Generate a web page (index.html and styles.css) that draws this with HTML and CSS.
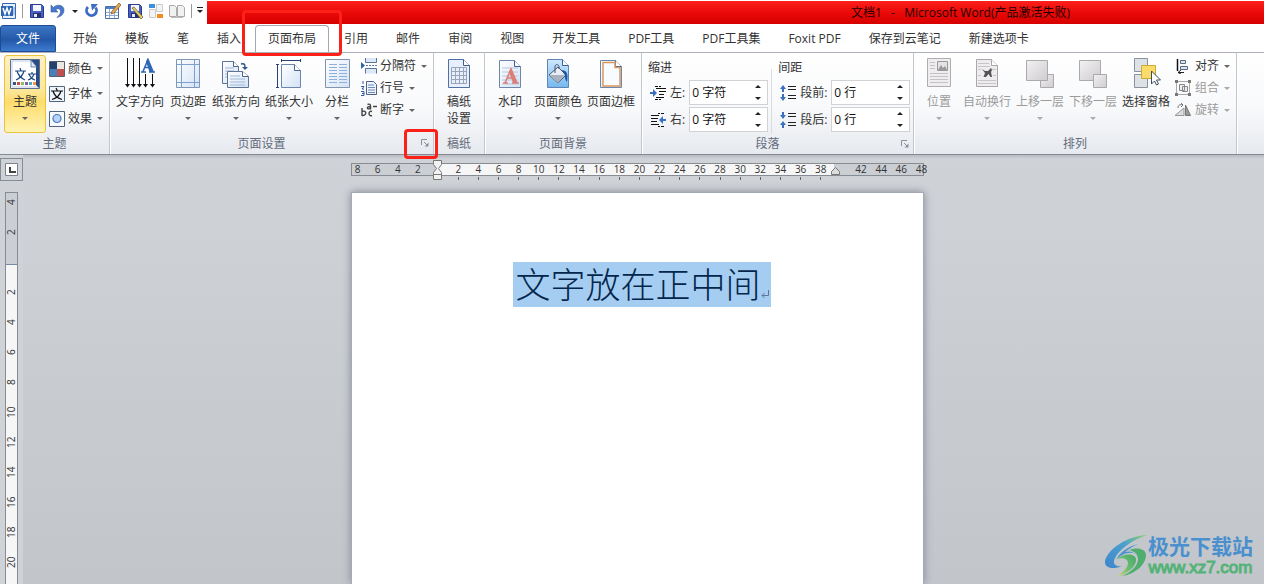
FILE: index.html
```html
<!DOCTYPE html>
<html lang="zh-CN">
<head>
<meta charset="utf-8">
<title>文档1 - Microsoft Word</title>
<link rel="stylesheet" href="styles.css">
</head>
<body>
<svg class="defs" aria-hidden="true">
  <defs>
    <linearGradient id="g-sheet" x1="0" y1="0" x2="1" y2="1"><stop offset="0" stop-color="#fff"/><stop offset="1" stop-color="#d3e2f6"/></linearGradient>
    <linearGradient id="g-gray" x1="0" y1="0" x2="1" y2="1"><stop offset="0" stop-color="#f3f1f3"/><stop offset="1" stop-color="#cfccd0"/></linearGradient>
    <linearGradient id="g-sky" x1="0" y1="0" x2="0" y2="1"><stop offset="0" stop-color="#cfe8fd"/><stop offset="1" stop-color="#74b8ee"/></linearGradient>
    <linearGradient id="g-swirl" x1="0" y1="1" x2="1" y2="0"><stop offset="0" stop-color="#3f86cb"/><stop offset=".6" stop-color="#4a9fd0"/><stop offset="1" stop-color="#8fd06a"/></linearGradient>
    <linearGradient id="g-leaf" x1="0" y1="1" x2="1" y2="0"><stop offset="0" stop-color="#e2d455"/><stop offset=".45" stop-color="#6cc070"/><stop offset="1" stop-color="#45a76a"/></linearGradient>
    <symbol id="sheet" viewBox="0 0 24 30"><path d="M1.500 1.500h15l6 6v21h-21z" fill="url(#g-sheet)" stroke="#6d86ab"/><path d="M16.500 1.500v6h6" fill="#fff" stroke="#3f5f92"/></symbol>
    <symbol id="sheet-gray" viewBox="0 0 24 30"><path d="M1.500 1.500h15l6 6v21h-21z" fill="#eeecee" stroke="#aaa7ab"/><path d="M16.500 1.500v6h6" fill="#fff" stroke="#aaa7ab"/></symbol>
    <symbol id="floppy" viewBox="0 0 16 16"><path d="M1.500 1.500h11l2 2v11h-13z" fill="#4a5fc4" stroke="#2b3a91"/><path d="M4 2h8v6H4z" fill="#f4f7ff"/><path d="M4 10h8v4.500H4z" fill="#26306e"/><path d="M5 11h3v3H5z" fill="#e6e9fa"/></symbol>
    <symbol id="launch" viewBox="0 0 8 8"><path d="M.500 6V.500H6" fill="none" stroke="#8b909a"/><path d="M3 3l3 3" stroke="#8b909a"/><path d="M7.500 3.500v4h-4z" fill="#8b909a"/></symbol>
  </defs>
</svg>

<header class="titlebar">
  <div class="quick">
    <svg class="i16" viewBox="0 0 16 16"><path d="M1.500.500h13v15h-13z" fill="#e8f0fb" stroke="#3668ad"/><path d="M0 3h12v10H0z" fill="#2c67b3"/><path d="M2 5l2 6 2-6 2 6 2-6" fill="none" stroke="#fff" stroke-width="1.500"/><path d="M13 4v8" stroke="#7da2d2"/></svg>
    <span class="bar"></span>
    <button aria-label="保存"><svg class="i16" viewBox="0 0 16 16"><use href="#floppy"/></svg></button>
    <button aria-label="撤消"><svg class="i16" viewBox="0 0 16 16"><path d="M1 2v7h7L5.800 6.800C8 4.500 11 6 10.500 9c-.400 2-1.500 3.500-3.500 5.500 4-1 7-3.500 7-7.500C14 2 7 .500 3.500 4.500z" fill="#4a78c8" stroke="#2f5ba8" stroke-width=".6"/></svg></button>
    <button class="narrow" aria-label="撤消选项"><span class="caret dark"></span></button>
    <button aria-label="恢复"><svg class="i16" viewBox="0 0 16 16"><path d="M4 4a5 5 0 1 0 7.500.500" fill="none" stroke="#3b6cc4" stroke-width="2.800"/><path d="M7 1h7L8 7.500z" fill="#3b6cc4"/></svg></button>
    <button aria-label="绘制表格"><svg class="i16" viewBox="0 0 16 16"><path d="M.500 3.500h13v12H.500z" fill="#fff" stroke="#4a6fa8"/><path d="M1 4h12v2H1z" fill="#4f7fc4"/><path d="M1 9.500h12M1 12.500h12M4.500 6v9M9.500 6v9" stroke="#8fa9cf"/><path d="M14 0l2 2-7 8-3 1 1-3z" fill="#e5a954" stroke="#7f5422" stroke-width=".7"/></svg></button>
    <button aria-label="保存并编辑"><svg class="i16" viewBox="0 0 16 16"><use href="#floppy"/><path d="M5 5l2-1 9 10-2 2z" fill="#e9cf6a" stroke="#635628" stroke-width=".7"/></svg></button>
    <button aria-label="版式"><svg class="i16" viewBox="0 0 16 16"><path d="M1 1h6v4H1z" fill="#3f8fdd"/><path d="M8.500 1.500h6v7h-6zM1.500 6.500h6v8h-6z" fill="#f3f3f3" stroke="#ccc"/><path d="M9 11h6v4H9z" fill="#f28c1e"/></svg></button>
    <button aria-label="阅读"><svg class="i16" viewBox="0 0 16 16"><path d="M.500 2.500h5l2 2v9h-7zM8.500 2.500h5l2 2v9h-7z" fill="#f1f1f1" stroke="#aaa"/><path d="M2 14.500h12" stroke="#bbb"/></svg></button>
    <span class="bar"></span>
    <button class="narrow" aria-label="自定义快速访问工具栏"><span class="caret dark over"></span></button>
  </div>
  <div class="title">文档1&nbsp;&nbsp; -&nbsp;&nbsp; Microsoft Word(产品激活失败)</div>
</header>

<nav class="tabs">
  <button class="tab file">文件</button>
  <button class="tab">开始</button>
  <button class="tab">模板</button>
  <button class="tab">笔</button>
  <button class="tab">插入</button>
  <button class="tab active">页面布局<span class="mark mark-tab"></span></button>
  <button class="tab">引用</button>
  <button class="tab">邮件</button>
  <button class="tab">审阅</button>
  <button class="tab">视图</button>
  <button class="tab">开发工具</button>
  <button class="tab">PDF工具</button>
  <button class="tab">PDF工具集</button>
  <button class="tab">Foxit PDF</button>
  <button class="tab">保存到云笔记</button>
  <button class="tab">新建选项卡</button>
</nav>

<section class="ribbon">
  <div class="group g-theme">
    <div class="tools">
      <button class="big selected"><svg class="i32" viewBox="0 0 32 32"><path d="M1.500 1.500h29v29h-29z" fill="#fff" stroke="#5b6f8e"/><path d="M3 3h26v26H3z" fill="#fff" stroke="#b9cbe2"/><path d="M22 2h8v28l-3-3V9z" fill="#2a4c86"/><path d="M22 2v7h6z" fill="#dfe9f6" stroke="#345b97" stroke-width=".7"/><path d="M6 13h11M11 10l1 3M7 22c4-2 7-5 8-9M8 13c1 4 4 7 8 9M19 16h8M23 14v2M19 22c3-1 5-3 6-6M20 16c1 3 3 5 6 6" fill="none" stroke="#1f4b86" stroke-width="1.200"/><path d="M4 24h3v3H4z" fill="#33557f"/><path d="M8 24h3v3H8z" fill="#c0504d"/><path d="M12 24h3v3h-3z" fill="#9bbb59"/><path d="M16 24h3v3h-3z" fill="#8064a2"/><path d="M20 24h3v3h-3z" fill="#4bacc6"/><path d="M24 24h3v3h-3z" fill="#f79646"/></svg><span class="name">主题</span><span class="caret"></span></button>
      <div class="stack tall">
        <button class="small"><svg class="i16" viewBox="0 0 16 16"><path d="M.500.500h15v15H.500z" fill="#fff" stroke="#555f70"/><path d="M1 1h7v7H1z" fill="#23426f"/><path d="M8 1h7v7H8z" fill="#ece8df"/><path d="M1 8h7v7H1z" fill="#4a7ebb"/><path d="M8 8h7v7H8z" fill="#c0504d"/></svg>颜色<span class="caret"></span></button>
        <button class="small"><svg class="i16" viewBox="0 0 16 16"><path d="M.500.500h15v15H.500z" fill="#eef4fc" stroke="#53647e"/><path d="M2 5h12M7 2l1.500 3M3 13.500C8 12 11 9 12 5M4 5c1 4 4 7 9 8.500" fill="none" stroke="#111" stroke-width="1.200"/></svg>字体<span class="caret"></span></button>
        <button class="small"><svg class="i16" viewBox="0 0 16 16"><path d="M.500.500h15v15H.500z" fill="#f6f9fe" stroke="#53647e"/><circle cx="8" cy="7.500" r="4" fill="#b7d3f7" stroke="#4876bd" stroke-width="1.200"/></svg>效果<span class="caret"></span></button>
      </div>
    </div>
    <footer><h2>主题</h2></footer>
  </div>

  <div class="group g-setup">
    <div class="tools">
      <button class="big"><svg class="i32" viewBox="0 0 32 32"><path d="M3.500 0v28M9.500 0v28M15.500 0v28M21.500 16v12M28.500 16v12" stroke="#111"/><path d="M1 26h5l-2.500 3.500zM7 26h5l-2.500 3.500zM13 26h5l-2.500 3.500zM19 26h5l-2.500 3.500zM26 26h5l-2.500 3.500z" fill="#111"/><path d="M17 14h5M25 14h6M19 13.500l5-12 5 12M21 9.500h6" fill="none" stroke="#2f67b8" stroke-width="1.600"/><path d="M23.500.500L29 14h-3.500L22 3.500z" fill="#2f67b8"/></svg><span class="name">文字方向</span><span class="caret"></span></button>
      <button class="big"><svg class="i32" viewBox="0 0 32 32"><path d="M4.500 1.500h23v28h-23z" fill="url(#g-sheet)" stroke="#8096b5"/><path d="M9.500 2v27M22.500 2v27M5 6.500h22M5 24.500h22" stroke="#7ea0cd"/></svg><span class="name">页边距</span><span class="caret"></span></button>
      <button class="big"><svg class="i32" viewBox="0 0 32 32"><path d="M2.500 3.500h11l5 5v17h-16z" fill="url(#g-sheet)" stroke="#5f7394"/><path d="M13.500 3.500v5h5" fill="#fff" stroke="#49648e"/><path d="M5 10h9M5 13h9M5 16h9M5 19h4" stroke="#9eb7d8"/><path d="M7.500 13.500h15l6 5v11h-21z" fill="url(#g-sheet)" stroke="#5f7394"/><path d="M22.500 13.500v5h6" fill="#fff" stroke="#49648e"/><path d="M10 18h10M10 21h15M10 24h15M10 27h15" stroke="#9eb7d8"/><path d="M21 6c4-1 4 1 4 4" fill="none" stroke="#31588d" stroke-width="1.500"/><path d="M22 9h6l-3 3z" fill="#31588d"/></svg><span class="name">纸张方向</span><span class="caret"></span></button>
      <button class="big"><svg class="i32" viewBox="0 0 32 32"><path d="M8.500 6.500h13l6 6v17h-19z" fill="url(#g-sheet)" stroke="#6d86ab"/><path d="M21.500 6.500v6h6" fill="#fff" stroke="#49648e"/><path d="M9 2.500h18M8.500 1v3M27.500 1v3M4.500 7v22M3 6.500h3M3 29.500h3" stroke="#28437c"/></svg><span class="name">纸张大小</span><span class="caret"></span></button>
      <button class="big"><svg class="i32" viewBox="0 0 32 32"><path d="M4.500 1.500h24v28h-24z" fill="url(#g-sheet)" stroke="#8393ab"/><path d="M8 6.500h8M8 9.500h8M8 12.500h8M8 15.500h8M8 18.500h8M8 21.500h8M8 24.500h8M18 6.500h8M18 9.500h8M18 12.500h8M18 15.500h8M18 18.500h8M18 21.500h8M18 24.500h8" stroke="#8fb0da"/></svg><span class="name">分栏</span><span class="caret"></span></button>
      <div class="stack">
        <button class="small"><svg class="i16" viewBox="0 0 16 16"><path d="M4.500 0v4.500h11V0M4.500 15.500v-5h11v5" fill="#dce8f7" stroke="#5c7596"/><path d="M5 7.500h11" stroke="#5c7596" stroke-dasharray="2 1"/><path d="M0 4l4 3.500L0 11z" fill="#2c62ad"/></svg>分隔符<span class="caret"></span></button>
        <button class="small"><svg class="i16" viewBox="0 0 16 16"><path d="M5.500 1.500h7l3 3v10h-10z" fill="#edf3fc" stroke="#4c6184"/><path d="M7 5h6M7 7.500h7M7 10h7M7 12.500h7" stroke="#6d8bb5"/><path d="M2 1v3M0 6.500h3L1 9h2M0 11.500h3v4H0M1 13.500h2" fill="none" stroke="#2d5ba7"/></svg>行号<span class="caret"></span></button>
        <button class="small"><svg class="i16" viewBox="0 0 16 16"><path d="M1 6v8M1 9.500c5-2 5 4.500 0 4M11 9.500C7 8 7 15 11 13.500M6.500 2.500c3-1 3.500 0 3 5M9 4.500C5 4.500 6 8 9 6.500M12 4.500h4" fill="none" stroke="#444" stroke-width="1.400"/></svg>断字<span class="caret"></span></button>
      </div>
    </div>
    <footer class="has-launch"><h2>页面设置</h2><button class="launch" aria-label="页面设置对话框"><svg viewBox="0 0 8 8"><use href="#launch"/></svg><span class="mark mark-launch"></span></button></footer>
  </div>

  <div class="group g-grid">
    <div class="tools">
      <button class="big"><svg class="i32" viewBox="0 0 32 32"><path d="M5.500 1.500h15l6 6v22h-21z" fill="#e6effb" stroke="#4f6fa5"/><path d="M20.500 1.500v6h6" fill="#fff" stroke="#3a5a8c"/><path d="M8.500 9.500h15v16h-15zM8 13.500h16M8 17.500h16M8 21.500h16M12.500 9v17M16.500 9v17M20.500 9v17" fill="none" stroke="#98a4b8"/></svg><span class="name">稿纸<br>设置</span></button>
    </div>
    <footer><h2>稿纸</h2></footer>
  </div>

  <div class="group g-back">
    <div class="tools">
      <button class="big"><svg class="i32" viewBox="0 0 32 32"><use href="#sheet" x="4" y="1" width="24" height="30"/><path d="M8 10h16M8 14h16M8 18h16M8 22h16M8 26h16" stroke="#b8c6da"/><path d="M9 25h5M18 25h7M11 25l6-14 6 14M13 20h7" fill="none" stroke="#dc7f79" stroke-width="1.600"/><path d="M17 10l6 15h-4l-4-11z" fill="#dc7f79"/></svg><span class="name">水印</span><span class="caret"></span></button>
      <button class="big"><svg class="i32" viewBox="0 0 32 32"><path d="M5.500 1.500h15l6 6v22h-21z" fill="url(#g-sky)" stroke="#5f84b5"/><path d="M20.500 1.500v6h6" fill="#fff" stroke="#3f5f92"/><path d="M7 17l9-8 8 8-8 8z" fill="#e9edf3" stroke="#47556c"/><path d="M7 17h16l-7 8z" fill="#a9b2c0"/><path d="M13 15V9c0-4 5-3 4 2" fill="none" stroke="#47556c"/><path d="M20 12c6 1 6 5 5 12-3-3-1-7-3-8z" fill="#1f56a8"/></svg><span class="name">页面颜色</span><span class="caret"></span></button>
      <button class="big"><svg class="i32" viewBox="0 0 32 32"><use href="#sheet" x="4" y="1" width="24" height="30"/><path d="M8 4.500h12v5h5v18.500H8z" fill="#f8fbff" stroke="#d9985c" stroke-width="1.500"/></svg><span class="name">页面边框</span></button>
    </div>
    <footer><h2>页面背景</h2></footer>
  </div>

  <div class="group g-para">
    <div class="tools fields">
      <fieldset>
        <legend>缩进</legend>
        <div class="field"><svg class="i16" viewBox="0 0 16 16"><path d="M5 1.500h3M9 1.500h2M6 3.500h10M9 6.500h7M9 9.500h5M6 12.500h8M5 14.500h3M9 14.500h2" stroke="#111"/><path d="M0 7h3V4l4 4-4 4V9H0z" fill="#3b6fc0"/></svg><label for="left">左:</label><div class="spin"><input id="left" value="0 字符"><button aria-label="增加"><span class="caret up"></span></button><button aria-label="减少"><span class="caret dark"></span></button></div></div>
        <div class="field"><svg class="i16" viewBox="0 0 16 16"><path d="M8 1.500h2M11 1.500h3M1 3.500h8M1 6.500h7M1 9.500h6M1 12.500h8M8 14.500h2M11 14.500h3" stroke="#111"/><path d="M16 7h-3V4L9 8l4 4V9h3z" fill="#3b6fc0"/></svg><label for="right">右:</label><div class="spin"><input id="right" value="0 字符"><button aria-label="增加"><span class="caret up"></span></button><button aria-label="减少"><span class="caret dark"></span></button></div></div>
      </fieldset>
      <fieldset class="spacing">
        <legend>间距</legend>
        <div class="field"><svg class="i16" viewBox="0 0 16 16"><path d="M8 1.500h8M8 4.500h8M8 10.500h8M8 13.500h8" stroke="#222"/><path d="M3 0l3 4H4v3H2V4H0zM3 16l3-4H4V9H2v3H0z" fill="#3b6fc0"/></svg><label for="before">段前:</label><div class="spin"><input id="before" value="0 行"><button aria-label="增加"><span class="caret up"></span></button><button aria-label="减少"><span class="caret dark"></span></button></div></div>
        <div class="field"><svg class="i16" viewBox="0 0 16 16"><path d="M8 1.500h8M8 4.500h8M8 10.500h8M8 13.500h8" stroke="#222"/><path d="M3 7l3-4H4V0H2v3H0zM3 9l3 4H4v3H2v-3H0z" fill="#3b6fc0"/></svg><label for="after">段后:</label><div class="spin"><input id="after" value="0 行"><button aria-label="增加"><span class="caret up"></span></button><button aria-label="减少"><span class="caret dark"></span></button></div></div>
      </fieldset>
    </div>
    <footer class="has-launch"><h2>段落</h2><button class="launch" aria-label="段落对话框"><svg viewBox="0 0 8 8"><use href="#launch"/></svg></button></footer>
  </div>

  <div class="group g-arrange">
    <div class="tools">
      <button class="big" disabled><svg class="i32" viewBox="0 0 32 32"><path d="M4.500.500h23v28h-23z" fill="#efedf0" stroke="#b0adb1"/><path d="M14.500 3.500h10v9h-10z" fill="#e4e2e5" stroke="#999"/><path d="M15 12l3-5 2 3 2-2 2 4z" fill="#999"/><path d="M7 4.500h5M7 7.500h5M7 10.500h5M7 15.500h18M7 18.500h18M7 21.500h18M7 24.500h18" stroke="#c5c2c6"/></svg><span class="name">位置</span><span class="caret"></span></button>
      <button class="big" disabled><svg class="i32" viewBox="0 0 32 32"><use href="#sheet-gray" x="4" y="0" width="24" height="30"/><path d="M7 5.500h11M7 8.500h12M7 11.500h3M21 11.500h4M7 17.500h3M22 17.500h3M7 22.500h18M7 25.500h18" stroke="#c8c5c9"/><path d="M11 11l3 2h3l3-3 1 2-1 2 1 5h-1.500l-2-3-2.500 3h-2.500l1.500-4z" fill="#555"/></svg><span class="name">自动换行</span><span class="caret"></span></button>
      <button class="big" disabled><svg class="i32" viewBox="0 0 32 32"><path d="M16.500 16.500h13v13h-13z" fill="url(#g-gray)" stroke="#aaa"/><path d="M2.500 2.500h21v20h-21z" fill="url(#g-gray)" stroke="#aaa"/></svg><span class="name">上移一层</span><span class="caret"></span></button>
      <button class="big" disabled><svg class="i32" viewBox="0 0 32 32"><path d="M2.500 2.500h21v20h-21z" fill="url(#g-gray)" stroke="#aaa"/><path d="M16.500 16.500h13v13h-13z" fill="url(#g-gray)" stroke="#aaa"/></svg><span class="name">下移一层</span><span class="caret"></span></button>
      <button class="big"><svg class="i32" viewBox="0 0 32 32"><path d="M4.500.500h13v13h-13zM4.500 16.500h13v13h-13z" fill="#dde2e6" stroke="#88939f"/><path d="M11.500 7.500h14v13h-14z" fill="#fbdc6b" stroke="#cfa935"/><path d="M21.500 13v13l3-3 2 4 2-1-2-4h4z" fill="#fff" stroke="#3e4c62"/></svg><span class="name">选择窗格</span></button>
      <div class="stack">
        <button class="small"><svg class="i16" viewBox="0 0 16 16"><path d="M2.500 1v12" stroke="#111" stroke-width="1.500"/><path d="M5.500 2.500h5v3h-5zM5.500 8.500h7v3h-7z" fill="#dce6f2" stroke="#586a82"/><path d="M3 14.500h6M6 12l-3 2.500L6 16" fill="none" stroke="#222"/></svg>对齐<span class="caret"></span></button>
        <button class="small" disabled><svg class="i16" viewBox="0 0 16 16"><path d="M1.500 1.500h13v13h-13z" fill="none" stroke="#aaa"/><path d="M4.500 4.500h5v6h-5zM7.500 6.500h5v5h-5z" fill="#eee" stroke="#888"/><path d="M0 0h3v3H0zM13 0h3v3h-3zM0 13h3v3H0zM13 13h3v3h-3z" fill="#777"/></svg>组合<span class="caret"></span></button>
        <button class="small" disabled><svg class="i16" viewBox="0 0 16 16"><path d="M0 13.500L9 6v7.500z" fill="#ddd" stroke="#999"/><path d="M10.500 13.500V3l5 10.500z" fill="#999" stroke="#777"/><path d="M3 6c0-3 2-4 5-3M6 1l2 2-2 2" fill="none" stroke="#777"/></svg>旋转<span class="caret"></span></button>
      </div>
    </div>
    <footer><h2>排列</h2></footer>
  </div>
</section>

<main class="workspace">
  <aside class="gutter">
    <button class="corner" aria-label="制表符"><svg viewBox="0 0 13 13"><path d="M.500.500h12v12H.500z" fill="#fff" stroke="#7c838e"/><path d="M4 4h2v4h5v2H4z" fill="#444"/></svg></button>
    <ol class="vruler"><li>4</li><li>2</li><li></li><li>2</li><li>4</li><li>6</li><li>8</li><li>10</li><li>12</li><li>14</li><li>16</li><li>18</li><li>20</li></ol>
  </aside>
  <div class="canvas">
    <div class="hruler">
      <ol class="scale"><li>8</li><li>6</li><li>4</li><li>2</li><li></li><li class="t">2</li><li class="t">4</li><li class="t">6</li><li class="t">8</li><li class="t">10</li><li class="t">12</li><li class="t">14</li><li class="t">16</li><li class="t">18</li><li class="t">20</li><li class="t">22</li><li class="t">24</li><li class="t">26</li><li class="t">28</li><li class="t">30</li><li class="t">32</li><li class="t">34</li><li class="t">36</li><li class="t">38</li><li></li><li>42</li><li>44</li><li>46</li><li>48</li></ol>
      <svg class="indent first" viewBox="0 0 9 21"><path d="M.500.500h8v4l-3 4 3 4v2h-8v-2l3-4-3-4zM.500 14.500h8v5h-8z" fill="#f2f2f2" stroke="#777"/></svg>
      <svg class="indent last" viewBox="0 0 9 11"><path d="M.500 10.500v-3l4-4 4 4v3z" fill="#ddd" stroke="#777"/></svg>
    </div>
    <article class="page"><p><mark>文字放在正中间<svg class="pilcrow" viewBox="0 0 8 8"><path d="M7.500 0v5.500H1M3.500 3L1 5.500 3.500 8" fill="none" stroke="#5d7896"/></svg></mark></p></article>
  </div>
</main>

<div class="brand">
  <svg viewBox="0 0 42 42"><path d="M42 0C22 1 3 14 0 26c-1 7 8 9 17 5-6 1-10-2-7-8C15 13 28 5 42 0z" fill="url(#g-swirl)"/><path d="M33 9C22 12 14 18 11 25c5-6 14-9 19-6-3-3-7-3-10-2 4-3 8-6 13-8z" fill="#4a93cf"/><path d="M24 15c7-3 17-2 17 5 0 9-10 19-24 21 9-4 16-10 16-17 0-5-4-8-9-9z" fill="#4fae6e"/><path d="M12 24c6-6 18-6 19 0 1 7-8 14-19 18 6-5 11-9 11-14 0-4-5-6-11-4z" fill="url(#g-leaf)"/></svg>
  <div><strong>极光下载站</strong><span>www.xz7.com</span></div>
</div>
</body>
</html>
```
FILE: styles.css
```css
* { box-sizing: border-box; }
body {
  margin: 0;
  min-height: 100vh;
  height: 100vh;
  display: flex;
  flex-direction: column;
  overflow: hidden;
  position: relative;
  font: 12px/16px "Open Sans", "Noto Sans CJK SC", sans-serif;
  color: #333;
  background: #fff;
}
button {
  font: inherit;
  color: inherit;
  background: none;
  border: 0;
  padding: 0;
  white-space: nowrap;
}
.defs { position: absolute; width: 0; height: 0; }
.i16 { width: 16px; height: 16px; display: block; flex: none; }
.i32 { width: 32px; height: 32px; display: block; flex: none; }
.caret {
  width: 0;
  height: 0;
  border: 3px solid transparent;
  border-top-color: #666;
  border-bottom: 0;
}
.caret.dark { border-top-color: #222; }
.caret.up { border-top: 0; border-bottom: 3px solid #222; }
.caret.over { position: relative; }
.caret.over::before {
  content: "";
  position: absolute;
  left: -3px;
  top: -6px;
  width: 6px;
  height: 1px;
  background: #222;
}

.titlebar { display: flex; height: 24px; flex: none; }
.quick {
  width: 207px;
  flex: none;
  display: flex;
  align-items: center;
  justify-content: space-between;
  padding: 0 3px 2px 1px;
}
.quick .narrow { width: 7px; display: flex; justify-content: center; }
.bar { width: 1px; height: 14px; background: #999; }
.title {
  flex: 1;
  display: flex;
  justify-content: flex-end;
  align-items: center;
  padding: 1px 194px 0 0;
  color: #200;
  background: linear-gradient(#fd201b, #ea0a08 50%, #d60000);
  border-top: 1px solid #fff;
}

.tabs {
  display: flex;
  flex: none;
  height: 29px;
  padding-top: 1px;
  border-bottom: 1px solid #adb1b8;
}
.tab { padding: 0 14px; }
.tab.file {
  padding: 0 15px;
  margin-right: 3px;
  color: #fff;
  border: 1px solid #1d4b94;
  border-radius: 3px 3px 0 0;
  background: linear-gradient(#3c76c4, #2458a8 55%, #3c7bd0);
}
.tab.active {
  position: relative;
  padding: 0 12px;
  margin: 0 1px 0 0;
  border: 1px solid #a4a8b0;
  border-bottom: 0;
  border-radius: 4px 4px 0 0;
  background: #fff;
}
.mark {
  position: absolute;
  border: 3px solid #fb2018;
  border-radius: 4px;
  pointer-events: none;
  z-index: 2;
}
.mark-tab { inset: -16px -14px -4px -14px; }
.mark-launch { inset: -10px -9px -12px -17px; }

.ribbon {
  display: flex;
  flex: none;
  height: 102px;
  border-bottom: 1px solid #858a93;
  background: linear-gradient(#fff, #f8f9fb 55%, #e6e9ee);
}
.group {
  display: flex;
  flex-direction: column;
  border-right: 1px solid #c3c7ce;
  box-shadow: 1px 0 #fff;
}
.g-theme { width: 110px; }
.g-setup { width: 324px; }
.g-grid { width: 51px; }
.g-back { width: 157px; }
.g-para { width: 272px; }
.g-arrange { width: 323px; }
.tools { display: flex; flex: 1; gap: 1px; padding: 2px 4px 0; }
.group footer { display: flex; align-items: center; height: 21px; position: relative; }
.group footer.has-launch { padding-right: 20px; }
.group h2 {
  flex: 1;
  margin: 0;
  font: inherit;
  text-align: center;
  color: #636b7b;
}
.launch {
  position: absolute;
  right: 4px;
  top: 6px;
  width: 8px;
  height: 8px;
}
.launch svg { display: block; width: 8px; height: 8px; }
.big {
  display: flex;
  flex-direction: column;
  align-items: center;
  min-width: 42px;
  height: 78px;
  padding: 3px 2px 0;
}
.big .name { line-height: 17px; margin-top: 3px; }
.big .caret { margin-top: 7px; }
.big.selected {
  border: 1px solid #e9c33c;
  border-radius: 3px;
  padding: 2px 1px 0;
  background: linear-gradient(#fdf0c4, #fce79b 45%, #fddc6c 60%, #fff3b4);
}
.stack { display: flex; flex-direction: column; margin-left: 2px; }
.small { display: flex; align-items: center; gap: 3px; height: 22px; }
.small .caret { margin-left: 2px; }
.tall { padding-top: 1px; }
.tall .small { height: 25px; }
.g-arrange .small { gap: 4px; }
.g-arrange .small .caret { margin-left: 1px; }
button:disabled { color: #9b9b9b; }
button:disabled .caret { border-top-color: #aaa; }

.fields { padding: 4px 4px 0 6px; gap: 3px; }
fieldset { flex: none; min-width: 0; margin: 0; padding: 0; border: 0; }
fieldset.spacing { border-left: 1px solid #d9dde3; padding-left: 6px; }
legend { padding: 0; height: 23px; line-height: 22px; }
.field {
  display: flex;
  align-items: center;
  height: 25px;
  margin-bottom: 2px;
  gap: 4px;
  padding-left: 2px;
}
.field label { white-space: nowrap; }
.spin {
  display: grid;
  grid-template: 1fr 1fr / 1fr 18px;
  width: 79px;
  height: 25px;
  border: 1px solid #d0d2d6;
  background: #fff;
}
.spin input {
  grid-row: 1 / 3;
  width: 100%;
  min-width: 0;
  border: 0;
  padding: 0 2px;
  font: inherit;
  color: #111;
  background: none;
}
.spin button { display: flex; align-items: center; justify-content: center; }

.workspace {
  display: flex;
  flex: 1;
  min-height: 0;
  overflow: hidden;
  background: linear-gradient(#b8bbc0, #cfd2d7 4px, #cdd0d5 20%, #c2c5ca);
}
.gutter { width: 23px; flex: none; display: flex; flex-direction: column; background: #cfd3d8; }
.corner {
  width: 23px;
  height: 23px;
  margin: 3px 0 11px;
  border: 1px solid #868b94;
  display: grid;
  place-items: center;
  flex: none;
}
.corner svg { width: 13px; height: 13px; }
ol { list-style: none; margin: 0; padding: 0; }
.vruler {
  flex: 1;
  min-height: 0;
  overflow: hidden;
  width: 13px;
  margin-left: 5px;
  border: 1px solid #868b94;
  border-bottom: 0;
  background: linear-gradient(#cbced3 71px, #788aa0 71px, #788aa0 72px, #f6f6f6 72px);
  font-size: 10px;
  line-height: 11px;
}
.vruler li {
  height: 30px;
  writing-mode: vertical-rl;
  transform: rotate(180deg);
  text-align: center;
}
.vruler li:first-child { margin-top: -6px; }
.canvas {
  flex: 1;
  display: flex;
  flex-direction: column;
  align-items: center;
  padding: 8px 13px 0 0;
  overflow: hidden;
}
.hruler {
  position: relative;
  width: 573px;
  height: 13px;
  flex: none;
  margin-bottom: 16px;
  border: 1px solid #868b94;
  background: linear-gradient(90deg, #cbced3 15%, #f6f6f6 15%, #f6f6f6 84.5%, #cbced3 84.5%);
}
.scale {
  display: grid;
  grid-template-columns: repeat(29, 1fr);
  margin: 0 -9px 0 -4px;
  font-size: 10px;
  line-height: 11px;
  text-align: center;
}
.scale li { height: 16px; }
.scale .t::after {
  content: "";
  display: block;
  width: 1px;
  height: 3px;
  margin: 2px auto 0;
  background: #666;
}
.indent { position: absolute; width: 9px; }
.indent.first { height: 21px; left: 81px; top: -4px; }
.indent.last { height: 11px; left: 479px; top: 0; }
.page {
  width: 573px;
  flex: 1;
  background: #fff;
  border: 1px solid #a5abb6;
  border-bottom: 0;
  box-shadow: 0 0 8px #858a93;
}
.page p {
  margin: 69px 0 0 10px;
  text-align: center;
  font: 200 35px/41px "Noto Sans CJK SC", sans-serif;
}
mark { display: inline-block; padding: 0 2px 4px 2px; color: #04264c; background: #a4cdf1; }
.pilcrow { width: 8px; height: 8px; }

.brand { position: absolute; right: 11px; bottom: 6px; display: flex; align-items: center; gap: 1px; }
.brand svg { width: 42px; height: 42px; }
.brand div { display: flex; flex-direction: column; align-items: center; }
.brand strong { font-size: 21px; line-height: 24px; color: #4a8fce; }
.brand span { font: 17px/20px "Liberation Sans", sans-serif; color: #55b378; -webkit-text-stroke: 1px #55b378; }
```
